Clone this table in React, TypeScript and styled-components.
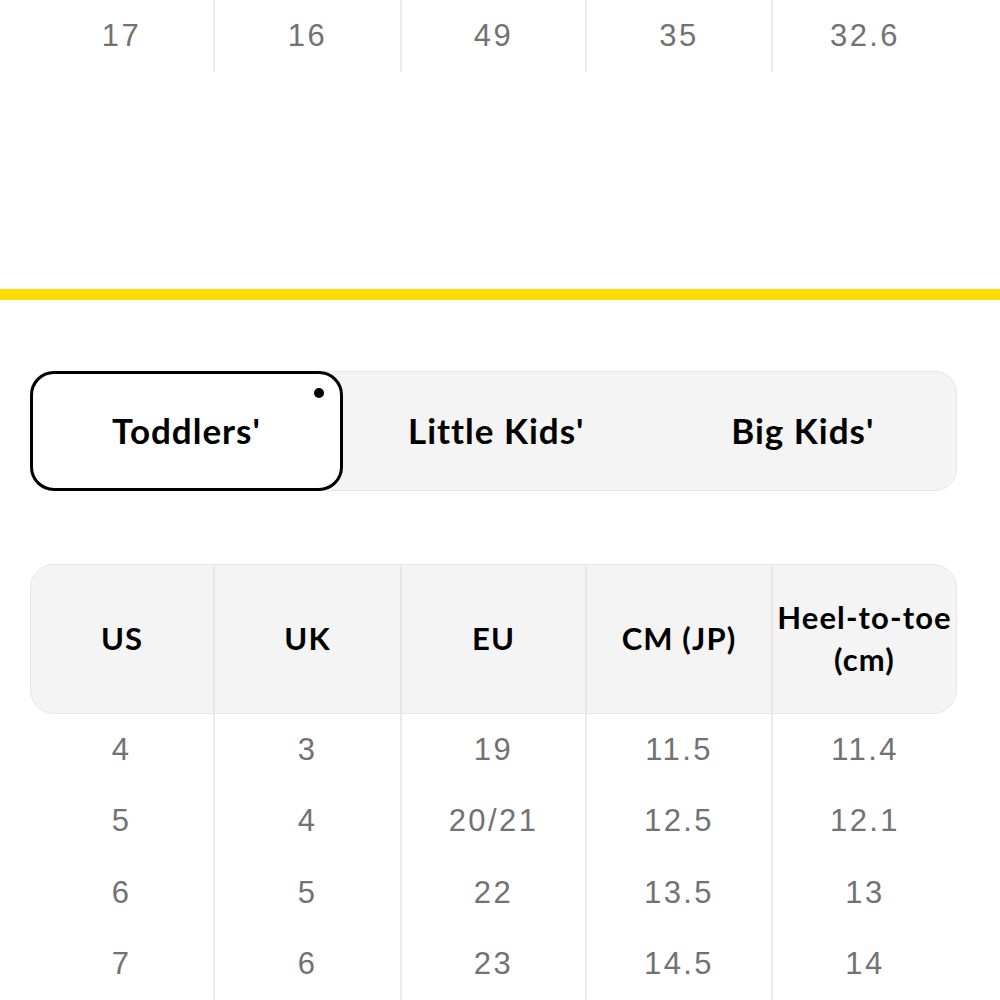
import React from "react";
import styled, { createGlobalStyle } from "styled-components";

const Global = createGlobalStyle`
  html, body { margin: 0; padding: 0; background: #fff; }
  body { font-family: "Liberation Sans", Arial, sans-serif; }
`;

const Page = styled.div`
  width: 1000px;
  height: 1000px;
  overflow: hidden;
  display: flex;
  flex-direction: column;
`;

const Section = styled.div`
  margin-left: 30px;
  width: 927px;
`;

const Grid = styled.div`
  display: grid;
  grid-template-columns: 183px 187px 185px 186px 186px;
`;

const DataCell = styled.div<{ $first?: boolean }>`
  height: 71.5px;
  display: flex;
  align-items: center;
  justify-content: center;
  border-left: ${(p) => (p.$first ? "none" : "2px solid #ebebeb")};
  font-family: "Liberation Sans", Arial, sans-serif;
  font-size: 31px;
  letter-spacing: 2.4px;
  color: #727272;
`;

const YellowBar = styled.div`
  height: 12px;
  background: #ffdc00;
  margin-top: 217px;
`;

const Tabs = styled.div`
  margin-top: 71px;
  display: grid;
  grid-template-columns: repeat(3, 1fr);
  height: 120px;
  background: #f4f4f4;
  border: 1px solid #e7e7e7;
  border-radius: 22px;
  box-sizing: border-box;
`;

const Tab = styled.div<{ $active?: boolean }>`
  position: relative;
  display: flex;
  align-items: center;
  justify-content: center;
  box-sizing: border-box;
  font-family: Lato, "Noto Sans", sans-serif;
  font-weight: 700;
  font-size: 35px;
  letter-spacing: 1px;
  padding-bottom: 3px;
  color: #000;
  margin: -1px;
  ${(p) =>
    p.$active &&
    `
    background: #fff;
    border: 3px solid #000;
    border-radius: 24px;
    margin: -1px 0 -1px -1px;
    width: 313px;
  `}
`;

const Dot = styled.span`
  position: absolute;
  top: 14px;
  right: 16px;
  width: 10px;
  height: 10px;
  border-radius: 50%;
  background: #000;
`;

const HeaderBox = styled.div`
  margin-top: 73px;
  background: #f4f4f4;
  border: 1px solid #e7e7e7;
  border-radius: 24px;
  box-sizing: border-box;
  height: 150px;
  display: grid;
  grid-template-columns: 182px 187px 185px 186px 185px;
  overflow: hidden;
`;

const HeadCell = styled.div<{ $first?: boolean }>`
  display: flex;
  align-items: center;
  justify-content: center;
  text-align: center;
  padding-bottom: 3px;
  border-left: ${(p) => (p.$first ? "none" : "2px solid #e7e7e7")};
  font-family: Lato, "Noto Sans", sans-serif;
  font-weight: 700;
  font-size: 31px;
  letter-spacing: 1.1px;
  line-height: 42px;
  color: #000;
`;

const prevRow = ["17", "16", "49", "35", "32.6"];
const heads = ["US", "UK", "EU", "CM (JP)", "Heel-to-toe\n(cm)"];
const rows = [
  ["4", "3", "19", "11.5", "11.4"],
  ["5", "4", "20/21", "12.5", "12.1"],
  ["6", "5", "22", "13.5", "13"],
  ["7", "6", "23", "14.5", "14"],
];

export default function App() {
  return (
    <Page>
      <Global />
      <Section>
        <Grid>
          {prevRow.map((v, i) => (
            <DataCell key={i} $first={i === 0}>{v}</DataCell>
          ))}
        </Grid>
      </Section>
      <YellowBar />
      <Section>
        <Tabs>
          <Tab $active>
            Toddlers'
            <Dot />
          </Tab>
          <Tab>Little Kids'</Tab>
          <Tab>Big Kids'</Tab>
        </Tabs>
        <HeaderBox>
          {heads.map((h, i) => (
            <HeadCell key={i} $first={i === 0}>
              {h.split("\n").map((l, j) => (
                <React.Fragment key={j}>
                  {j > 0 && <br />}
                  {l}
                </React.Fragment>
              ))}
            </HeadCell>
          ))}
        </HeaderBox>
        <Grid>
          {rows.flatMap((r, ri) =>
            r.map((v, i) => (
              <DataCell key={`${ri}-${i}`} $first={i === 0}>{v}</DataCell>
            ))
          )}
        </Grid>
      </Section>
    </Page>
  );
}
